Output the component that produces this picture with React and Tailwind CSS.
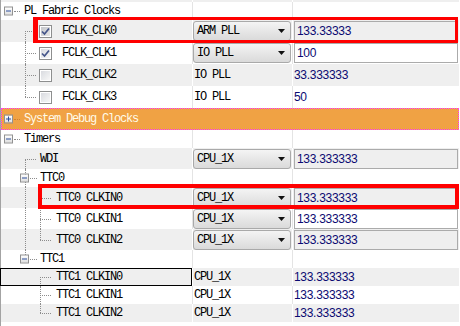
import React from "react";

const MONO = "font-['Liberation_Mono',monospace] text-[12px] tracking-[-1.2px] text-black";
const NUM = "font-['Liberation_Sans',Arial,sans-serif] text-[12px] tracking-[-0.3px] text-[#0a0a72]";

function Expander({ open, cls }) {
  return (
    <span className={`absolute top-1/2 -translate-y-1/2 w-[9px] h-[9px] border border-[#919191] bg-linear-to-b from-white to-[#dedede] ${cls}`}>
      <span className="absolute left-[1px] top-[3px] w-[5px] h-px bg-[#2c4f9c]" />
      {!open && <span className="absolute left-[3px] top-[1px] w-px h-[5px] bg-[#2c4f9c]" />}
    </span>
  );
}

function VLine({ x, part }) {
  const pos =
    part === "first" ? "top-1/2 bottom-0" : part === "last" ? "top-0 h-1/2" : "top-0 bottom-0";
  return <span className={`absolute w-0 border-l border-dotted border-[#8c8c8c] ${pos} ${x}`} />;
}

function HLine({ cls }) {
  return <span className={`absolute top-1/2 h-0 border-t border-dotted border-[#8c8c8c] ${cls}`} />;
}

function Check({ checked, dim }) {
  return (
    <span className="w-[13px] h-[13px] border border-[#8e8f8f] bg-white p-px shrink-0">
      <span
        className={`relative block w-full h-full bg-linear-to-br ${
          dim ? "from-[#c4c6ca] to-[#e6e6e6]" : "from-[#d9dbe0] to-[#f7f7f7]"
        }`}
      >
        {checked && (
          <svg className="absolute -left-px -top-px" width="11" height="11" viewBox="0 0 11 11">
            <path d="M2 5.5 L4.5 8 L9 2.5" fill="none" stroke="#44558a" strokeWidth="1.7" />
          </svg>
        )}
      </span>
    </span>
  );
}

function Combo({ text }) {
  return (
    <div className="w-[98px] h-[20px] rounded-[3px] border border-[#a9a9a9] bg-linear-to-b from-[#f4f4f4] to-[#dadada] flex items-center justify-between pl-[3px] pr-[5px]">
      <span className={MONO}>{text}</span>
      <svg width="7" height="4" viewBox="0 0 7 4">
        <polygon points="0,0 7,0 3.5,4" fill="#111" />
      </svg>
    </div>
  );
}

function Field({ text, shade }) {
  return (
    <div className={`w-full h-[20px] border border-[#ababab] flex items-center pl-[2px] ${shade ? "bg-[#efefef]" : "bg-white"}`}>
      <span className={NUM}>{text}</span>
    </div>
  );
}

function Row({ h, shade, tree, mid, right, selected }) {
  const bg = shade ? "bg-[#efefef]" : "bg-white";
  const div = shade ? "border-white" : "border-[#e4e4e4]";
  return (
    <div className={`flex ${h} ${bg}`}>
      <div className="relative w-[191px] shrink-0 flex items-center">
        {tree}
        {selected && <span className="absolute inset-y-0 -left-px right-0 border border-black" />}
      </div>
      <div className={`w-[100px] shrink-0 border-l ${div} flex items-center pl-0`}>{mid}</div>
      <div className={`w-[166px] shrink-0 border-l ${div} flex items-center pl-px`}>{right}</div>
    </div>
  );
}

function Plain({ children }) {
  return <span className={`${MONO} pl-px`}>{children}</span>;
}

function ClkRow({ label, checked, dim, part, shade, src, combo, val, field }) {
  return (
    <Row
      h="h-[22px]"
      shade={shade}
      tree={
        <>
          <VLine x="left-[24px]" part={part} />
          <HLine cls="left-[24px] w-[11px]" />
          <div className="flex items-center pl-[38px] gap-[10px]">
            <Check checked={checked} dim={dim} />
            <span className={MONO}>{label}</span>
          </div>
        </>
      }
      mid={combo ? <Combo text={src} /> : <Plain>{src}</Plain>}
      right={field ? <Field text={val} shade={shade} /> : <span className={NUM}>{val}</span>}
    />
  );
}

function TimerRow({ label, h, shade, level, part, outer, src, combo, val, selected }) {
  return (
    <Row
      h={h}
      shade={shade}
      selected={selected}
      tree={
        <>
          {outer && <VLine x="left-[24px]" part="mid" />}
          {level === 1 ? (
            <>
              <VLine x="left-[24px]" part={part} />
              <HLine cls="left-[24px] w-[11px]" />
              <span className={`${MONO} pl-[39px]`}>{label}</span>
            </>
          ) : (
            <>
              <VLine x="left-[39px]" part={part} />
              <HLine cls="left-[39px] w-[11px]" />
              <span className={`${MONO} pl-[55px]`}>{label}</span>
            </>
          )}
        </>
      }
      mid={combo ? <Combo text={src} /> : <Plain>{src}</Plain>}
      right={combo ? <Field text={val} shade={shade} /> : <span className={NUM}>{val}</span>}
    />
  );
}

function GroupRow({ label, last }) {
  return (
    <Row
      h="h-[18px]"
      shade={false}
      tree={
        <>
          {last ? <VLine x="left-[24px]" part="last" /> : <VLine x="left-[24px]" part="mid" />}
          <Expander open cls="left-[19px]" />
          <HLine cls="left-[29px] w-[7px]" />
          <span className={`${MONO} pl-[39px]`}>{label}</span>
        </>
      }
    />
  );
}

export default function App() {
  return (
    <div className="relative w-[460px] h-[326px] bg-white overflow-hidden">
      <div className="border-l border-[#a3a3a3] h-full w-[459px]">
        {/* top sliver */}
        <Row h="h-[2px]" shade />

        {/* PL Fabric Clocks */}
        <Row
          h="h-[18px]"
          tree={
            <>
              <Expander open cls="left-[3px]" />
              <HLine cls="left-[13px] w-[6px]" />
              <span className={`${MONO} pl-[23px]`}>PL Fabric Clocks</span>
            </>
          }
        />
        <ClkRow label="FCLK_CLK0" checked dim part="first" shade src="ARM PLL" combo val="133.33333" field />
        <ClkRow label="FCLK_CLK1" checked part="mid" src="IO PLL" combo val="100" field />
        <ClkRow label="FCLK_CLK2" part="mid" shade src="IO PLL" val="33.333333" />
        <ClkRow label="FCLK_CLK3" part="last" src="IO PLL" val="50" />

        {/* System Debug Clocks */}
        <div className="relative h-[22px] w-[458px] bg-[#f0a244] border border-dotted border-[#ff3cff] flex items-center">
          <Expander cls="left-[2px]" />
          <HLine cls="left-[12px] w-[6px] border-[#d08030]" />
          <span className="font-['Liberation_Mono',monospace] text-[12px] tracking-[-1.2px] text-[#fffbea] pl-[22px]">
            System Debug Clocks
          </span>
        </div>

        {/* Timers */}
        <Row
          h="h-[18px]"
          tree={
            <>
              <Expander open cls="left-[3px]" />
              <HLine cls="left-[13px] w-[6px]" />
              <span className={`${MONO} pl-[23px]`}>Timers</span>
            </>
          }
        />
        <TimerRow label="WDI" h="h-[21px]" shade level={1} part="first" src="CPU_1X" combo val="133.333333" />
        <GroupRow label="TTC0" />
        <TimerRow label="TTC0 CLKIN0" h="h-[21px]" shade level={2} part="first" outer src="CPU_1X" combo val="133.333333" />
        <TimerRow label="TTC0 CLKIN1" h="h-[21px]" level={2} part="mid" outer src="CPU_1X" combo val="133.333333" />
        <TimerRow label="TTC0 CLKIN2" h="h-[21px]" shade level={2} part="last" outer src="CPU_1X" combo val="133.333333" />
        <GroupRow label="TTC1" last />
        <TimerRow label="TTC1 CLKIN0" h="h-[18px]" shade level={2} part="first" src="CPU_1X" val="133.333333" selected />
        <TimerRow label="TTC1 CLKIN1" h="h-[18px]" level={2} part="mid" src="CPU_1X" val="133.333333" />
        <TimerRow label="TTC1 CLKIN2" h="h-[18px]" shade level={2} part="last" src="CPU_1X" val="133.333333" />
      </div>

      {/* red annotation boxes */}
      <div className="absolute left-[33px] top-[17px] w-[425px] h-[26px] border-[3px] border-l-[5px] border-[#ff0000]" />
      <div className="absolute left-[38px] top-[184px] w-[421px] h-[25px] border-4 border-[#ff0000]" />
    </div>
  );
}
